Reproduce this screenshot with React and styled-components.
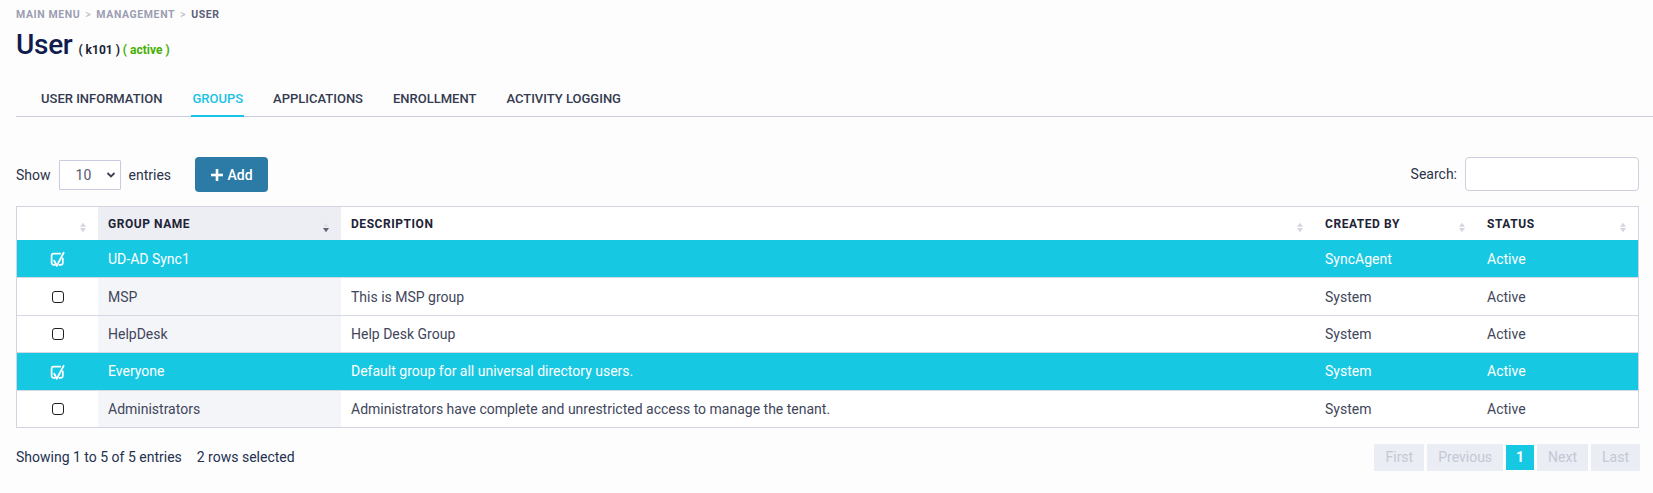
import React from "react";
import styled, { createGlobalStyle } from "styled-components";

const GlobalStyle = createGlobalStyle`
  html, body { margin: 0; padding: 0; }
  body {
    background: #fdfdfd;
    font-family: Roboto, "Liberation Sans", Arial, sans-serif;
    color: #2c3249;
  }
  * { box-sizing: border-box; }
`;

const CYAN = "#17c8e3";

const Page = styled.div`
  padding: 8px 14px 0 16px;
  width: 1653px;
`;

const Breadcrumb = styled.nav`
  display: flex;
  align-items: center;
  gap: 5px;
  font-size: 10.5px;
  line-height: 13px;
  font-weight: 700;
  letter-spacing: 0.6px;
  text-transform: uppercase;
  color: #9b9eb1;
`;

const Crumb = styled.span`
  color: ${(p) => (p.$current ? "#5c6177" : "#9b9eb1")};
`;

const Sep = styled.span`
  color: #b3b6c4;
  font-weight: 400;
`;

const TitleRow = styled.h1`
  margin: 7px 0 0;
  display: flex;
  align-items: baseline;
  height: 34px;
  line-height: 34px;
  font-size: 28px;
  font-weight: 500;
`;

const TitleText = styled.span`
  font-size: 28px;
  line-height: 34px;
  color: #101c4d;
  letter-spacing: -0.3px;
  margin-right: 6px;
`;

const TitleTag = styled.span`
  font-size: 12px;
  line-height: 14px;
  font-weight: 700;
  color: ${(p) => p.$color};
  white-space: pre;
`;

const TabBar = styled.div`
  margin: 29px -14px 0 0;
  display: flex;
  padding-left: 10px;
  border-bottom: 1px solid #c9cce0;
`;

const Tab = styled.div`
  margin: 0 14px -1px;
  padding: 0 1px 8px;
  font-size: 13px;
  line-height: 16px;
  font-weight: 500;
  text-transform: uppercase;
  color: ${(p) => (p.$active ? "#1ac2e6" : "#343a4f")};
  border-bottom: 2px solid ${(p) => (p.$active ? "#1ac2e6" : "transparent")};
`;

const Controls = styled.div`
  margin-top: 40px;
  display: flex;
  align-items: flex-start;
  justify-content: space-between;
`;

const ControlGroup = styled.div`
  display: flex;
  align-items: center;
`;

const Label = styled.label`
  font-size: 14px;
  color: #2c3249;
  display: flex;
  align-items: center;
  height: 30px;
`;

const SelectWrap = styled.div`
  position: relative;
  margin: 0 8px;
  width: 62px;
  height: 30px;
`;

const Select = styled.select`
  appearance: none;
  -webkit-appearance: none;
  width: 100%;
  height: 100%;
  border: 1px solid #c9cce0;
  border-radius: 1px;
  background: #fff;
  font-family: inherit;
  font-size: 14px;
  color: #555a70;
  padding: 0 0 0 16px;
  outline: none;
`;

const Chevron = styled.svg`
  position: absolute;
  right: 5px;
  top: 11px;
  pointer-events: none;
`;

const AddButton = styled.button`
  margin-left: 24px;
  width: 73px;
  height: 35px;
  border: none;
  border-radius: 4px;
  background: #2c7ba6;
  color: #fff;
  font-family: inherit;
  font-size: 14px;
  font-weight: 500;
  display: flex;
  align-items: center;
  justify-content: center;
  gap: 5px;
  padding: 0;
`;

const SearchInput = styled.input`
  margin-left: 8px;
  width: 174px;
  height: 34px;
  border: 1px solid #cdd0de;
  border-radius: 4px;
  background: #fff;
  outline: none;
`;

const Table = styled.div`
  margin-top: 14px;
  border: 1px solid #d2d5e1;
  background: #fff;
`;

const COLS = "81px 243px 1fr 162px 161px";

const HeadRow = styled.div`
  display: grid;
  grid-template-columns: ${COLS};
  height: 33px;
`;

const HeadCell = styled.div`
  position: relative;
  display: flex;
  align-items: center;
  padding: 0 10px;
  font-size: 12px;
  font-weight: 700;
  letter-spacing: 0.55px;
  text-transform: uppercase;
  color: #1e2336;
  background: ${(p) => (p.$sorted ? "#eceef4" : "#fff")};
`;

const SortIcon = styled.svg`
  position: absolute;
  right: 11px;
  top: 15px;
`;

const Row = styled.div`
  display: grid;
  grid-template-columns: ${COLS};
  height: 37.4px;
  border-top: ${(p) => (p.$first ? "none" : "1px solid #d6d9e3")};
  background: ${(p) => (p.$selected ? CYAN : "#fff")};
`;

const Cell = styled.div`
  display: flex;
  align-items: center;
  justify-content: ${(p) => (p.$center ? "center" : "flex-start")};
  padding: 0 10px;
  font-size: 14px;
  color: ${(p) => (p.$selected ? "#fff" : "#41465b")};
  background: ${(p) => (p.$sorted && !p.$selected ? "#f4f5f9" : "transparent")};
  white-space: nowrap;
`;

const Box = styled.span`
  display: block;
  width: 12px;
  height: 12px;
  border: 1.5px solid #1f1f24;
  border-radius: 3px;
  background: #fff;
`;

const Footer = styled.div`
  margin-top: 16px;
  display: flex;
  align-items: center;
  justify-content: space-between;
`;

const Info = styled.div`
  font-size: 14px;
  color: #243050;
  display: flex;
  gap: 15px;
`;

const Pager = styled.div`
  display: flex;
  align-items: center;
  gap: 3px;
  margin-right: -1px;
`;

const PageBtn = styled.button`
  height: ${(p) => (p.$active ? "25px" : "27px")};
  min-width: ${(p) => (p.$active ? "28px" : "0")};
  padding: 0 ${(p) => (p.$active ? "0" : "11px")};
  border: none;
  border-radius: 0;
  background: ${(p) => (p.$active ? CYAN : "#eaedf3")};
  color: ${(p) => (p.$active ? "#fff" : "#c4c8d5")};
  font-family: inherit;
  font-size: 14px;
  font-weight: ${(p) => (p.$active ? 700 : 400)};
`;

const CheckIcon = styled.svg`
  margin-top: 2px;
`;

const CheckedIcon = () => (
  <CheckIcon width="17" height="17" viewBox="0 0 15 15" fill="none">
    <path
      d="M10 2.3H4.2A1.9 1.9 0 0 0 2.3 4.2v6.1a1.9 1.9 0 0 0 1.9 1.9h1.1"
      stroke="#fff"
      strokeWidth="1.5"
      strokeLinecap="round"
    />
    <path
      d="M12.2 6.5v3.8a1.9 1.9 0 0 1-1.9 1.9H9.2"
      stroke="#fff"
      strokeWidth="1.5"
      strokeLinecap="round"
    />
    <path
      d="M4.6 8.6L6.9 13L12.9 1.6"
      stroke="#fff"
      strokeWidth="1.6"
      strokeLinecap="round"
      strokeLinejoin="round"
    />
  </CheckIcon>
);

const Sort = ({ active }) => (
  <SortIcon width="8" height="11" viewBox="0 0 8 11">
    <path d="M4 0.8L7 4.8H1z" fill={active ? "#dfe1e7" : "#d3d6de"} />
    <path d="M1 6H7L4 10.2z" fill={active ? "#5f6477" : "#d3d6de"} />
  </SortIcon>
);

const rows = [
  { name: "UD-AD Sync1", desc: "", by: "SyncAgent", status: "Active", sel: true },
  { name: "MSP", desc: "This is MSP group", by: "System", status: "Active" },
  { name: "HelpDesk", desc: "Help Desk Group", by: "System", status: "Active" },
  { name: "Everyone", desc: "Default group for all universal directory users.", by: "System", status: "Active", sel: true },
  { name: "Administrators", desc: "Administrators have complete and unrestricted access to manage the tenant.", by: "System", status: "Active" },
];

const tabs = ["User Information", "Groups", "Applications", "Enrollment", "Activity Logging"];

export default function App() {
  return (
    <>
      <GlobalStyle />
      <Page>
        <Breadcrumb>
          <Crumb>Main Menu</Crumb>
          <Sep>&gt;</Sep>
          <Crumb>Management</Crumb>
          <Sep>&gt;</Sep>
          <Crumb $current>User</Crumb>
        </Breadcrumb>
        <TitleRow>
          <TitleText>User</TitleText>
          <TitleTag $color="#1a1f36">( k101 )</TitleTag>
          <TitleTag $color="#45b000"> ( active )</TitleTag>
        </TitleRow>
        <TabBar>
          {tabs.map((t) => (
            <Tab key={t} $active={t === "Groups"}>
              {t}
            </Tab>
          ))}
        </TabBar>

        <Controls>
          <ControlGroup>
            <Label>Show</Label>
            <SelectWrap>
              <Select defaultValue="10">
                <option>10</option>
                <option>25</option>
                <option>50</option>
              </Select>
              <Chevron width="10" height="8" viewBox="0 0 10 8">
                <path d="M1.5 2L5 5.5L8.5 2" stroke="#3a3f52" strokeWidth="1.8" fill="none" />
              </Chevron>
            </SelectWrap>
            <Label>entries</Label>
            <AddButton>
              <svg width="12" height="12" viewBox="0 0 12 12">
                <rect x="4.7" y="0" width="2.6" height="12" fill="#fff" />
                <rect x="0" y="4.7" width="12" height="2.6" fill="#fff" />
              </svg>
              Add
            </AddButton>
          </ControlGroup>
          <ControlGroup>
            <Label>Search:</Label>
            <SearchInput />
          </ControlGroup>
        </Controls>

        <Table>
          <HeadRow>
            <HeadCell>
              <Sort />
            </HeadCell>
            <HeadCell $sorted>
              Group Name
              <Sort active />
            </HeadCell>
            <HeadCell>
              Description
              <Sort />
            </HeadCell>
            <HeadCell>
              Created By
              <Sort />
            </HeadCell>
            <HeadCell>
              Status
              <Sort />
            </HeadCell>
          </HeadRow>
          {rows.map((r, i) => (
            <Row key={r.name} $selected={r.sel} $first={i === 0}>
              <Cell $center $selected={r.sel}>
                {r.sel ? <CheckedIcon /> : <Box />}
              </Cell>
              <Cell $sorted $selected={r.sel}>{r.name}</Cell>
              <Cell $selected={r.sel}>{r.desc}</Cell>
              <Cell $selected={r.sel}>{r.by}</Cell>
              <Cell $selected={r.sel}>{r.status}</Cell>
            </Row>
          ))}
        </Table>

        <Footer>
          <Info>
            <span>Showing 1 to 5 of 5 entries</span>
            <span>2 rows selected</span>
          </Info>
          <Pager>
            <PageBtn>First</PageBtn>
            <PageBtn>Previous</PageBtn>
            <PageBtn $active>1</PageBtn>
            <PageBtn>Next</PageBtn>
            <PageBtn>Last</PageBtn>
          </Pager>
        </Footer>
      </Page>
    </>
  );
}
